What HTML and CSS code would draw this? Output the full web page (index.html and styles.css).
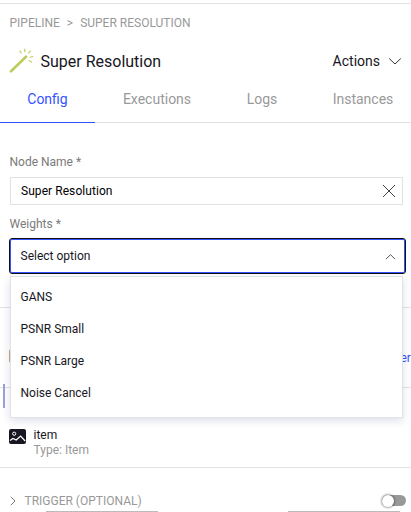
FILE: index.html
```html
<!DOCTYPE html>
<html lang="en">
<head>
<meta charset="utf-8">
<title>Super Resolution</title>
<link rel="stylesheet" href="styles.css">
</head>
<body>
<div class="panel">
  <nav class="breadcrumb"><span>PIPELINE</span><span class="sep">&gt;</span><span>SUPER RESOLUTION</span></nav>
  <header class="header">
    <svg class="wand" width="26" height="26" viewBox="0 0 26 26" fill="none" stroke="#bfcd5c" stroke-linecap="round">
      <path d="M2 23.2L17 8.7" stroke-width="2.7"/>
      <path d="M10.8 3.2l1.4 1.6M15.8 1.2v2.5M21.2 2.8l-1.5 2.2M21.3 9.3l2.4-.8M20.2 12.8l2.4 1.2" stroke-width="1.2"/>
    </svg>
    <h1 class="title">Super Resolution</h1>
    <button class="actions"><span>Actions</span>
      <svg width="14" height="8" viewBox="0 0 14 8" fill="none" stroke="#333"><path d="M1.2 1.5L7 7 12.8 1.5"/></svg>
    </button>
  </header>
  <div class="tabs">
    <span class="tab active">Config</span><span class="tab executions">Executions</span><span class="tab logs">Logs</span><span class="tab instances">Instances</span>
  </div>
  <section class="form">
    <label class="label">Node Name *</label>
    <div class="input"><span>Super Resolution</span>
      <svg width="14" height="14" viewBox="0 0 14 14" fill="none" stroke="#444"><path d="M1 1l12 12M13 1L1 13"/></svg>
    </div>
    <label class="label weights">Weights *</label>
    <div class="select"><span>Select option</span>
      <svg width="11" height="7" viewBox="0 0 11 7" fill="none" stroke="#555"><path d="M.9 6.1l4.6-4.4 4.6 4.4"/></svg>
      <ul class="menu">
        <li>GANS</li><li>PSNR Small</li><li>PSNR Large</li><li>Noise Cancel</li>
      </ul>
    </div>
  </section>
  <section class="inputs"><span class="edge"></span><span class="link">er</span></section>
  <section class="item">
    <span class="marker"></span>
    <svg class="picture" width="17" height="15" viewBox="0 0 17 15" fill="none">
      <rect width="17" height="15" rx="2" fill="#171723"/>
      <circle cx="5.2" cy="4.7" r="1.6" stroke="#fff"/>
      <path d="M1 11.5l3-2 3.2 1.5L11.6 7l4.6 5" stroke="#fff" stroke-width="1.2"/>
    </svg>
    <div class="item-text"><div class="item-name">item</div><div class="item-type">Type: Item</div></div>
  </section>
  <section class="trigger">
    <svg width="6" height="10" viewBox="0 0 6 10" fill="none" stroke="#777"><path d="M.8.8L5 5 .8 9.2"/></svg>
    <span class="trigger-text">TRIGGER (OPTIONAL)</span>
    <span class="toggle"><span class="knob"></span></span>
  </section>
  <footer class="footer"><span class="bar"></span><span class="bar"></span></footer>
</div>
</body>
</html>
```

FILE: styles.css
```css
* { box-sizing: border-box; }
body { margin: 0; background: #fff; font-family: Roboto, sans-serif; font-size: 12px; color: #171723; }
.panel { width: 411px; height: 512px; overflow: hidden; padding-top: 3px; display: flex; flex-direction: column; }
.panel > * { flex: none; }
.breadcrumb { height: 39px; border-top: 1px solid #e1e2e4; padding: 0 9.5px; display: flex; align-items: center; color: #999; }
.sep { margin: 0 7px; }
.header { height: 38px; padding: 0 9px; display: flex; align-items: center; }
.wand { margin-bottom: 1px; }
.title { margin: 1px 0 0 5.5px; font-size: 16px; font-weight: 400; }
.actions { margin: -1px 0 0 auto; padding: 0; border: 0; background: none; display: flex; align-items: center; gap: 8px; font: 14px Roboto, sans-serif; color: #171723; }
.tabs { height: 43px; border-bottom: 1px solid #e1e2e4; display: flex; font-size: 14px; color: #999; }
.tab { height: 43px; line-height: 38px; text-align: center; flex: none; }
.tab.active { width: 95px; color: #3452ff; border-bottom: 1px solid #3452ff; }
.executions { width: 124px; }
.logs { width: 86px; }
.instances { width: 116px; }
.form { height: 185px; padding: 30px 8px 0 10px; border-bottom: 1px solid #e1e2e4; }
.label { display: block; height: 24px; line-height: 18px; margin-left: -.5px; color: #7a7a7a; }
.input { height: 28px; border: 1px solid #e1e2e4; padding: 0 6px 0 10px; display: flex; align-items: center; justify-content: space-between; color: #000; letter-spacing: .06px; }
.weights { margin-top: 10px; height: 23px; }
.select { position: relative; height: 36px; margin: 0 -3px 0 -1px; border: 1px solid #101010; border-radius: 3px; box-shadow: inset 0 0 0 1px #3452ff; padding: 0 9px 0 10.5px; display: flex; align-items: center; justify-content: space-between; }
.menu { position: absolute; left: 0; top: 37px; width: 393px; height: 142px; margin: 0; padding: 4px 0; list-style: none; background: #fff; border: 1px solid #e1e2e4; box-shadow: 0 3px 8px rgba(40, 40, 130, .15); z-index: 2; }
.menu li { height: 32px; line-height: 32px; padding-left: 9.5px; }
.inputs { height: 80px; border-bottom: 1px solid #e1e2e4; display: flex; align-items: center; padding-left: 9px; padding-top: 20px; }
.edge { width: 1px; height: 12px; background: #c5a98c; margin-top: -4px; }
.link { margin-left: 390.5px; color: #3452ff; white-space: nowrap; }
.item { height: 80px; border-bottom: 1px solid #e1e2e4; display: flex; align-items: flex-start; }
.marker { width: 2px; height: 24px; margin: -4px 0 0 3px; background: #99a2d5; }
.picture { margin: 41px 0 0 4px; flex: none; }
.item-text { margin: 40px 0 0 7.5px; line-height: 15px; }
.item-type { color: #999; }
.trigger { height: 43px; padding: 23px 5px 0 10px; display: flex; align-items: center; color: #999; }
.trigger-text { margin-left: 8.5px; }
.toggle { width: 24px; height: 11px; border-radius: 6px; background: #999; margin: -2px 0 0 auto; }
.knob { display: block; width: 12px; height: 12px; border-radius: 50%; background: #fff; box-shadow: 0 0 2px 1px rgba(0, 0, 0, .35); }
.footer { height: 1px; padding: 0 11px 0 46px; display: flex; justify-content: space-between; }
.bar { width: 112px; height: 1px; background: #bbb; }
```
